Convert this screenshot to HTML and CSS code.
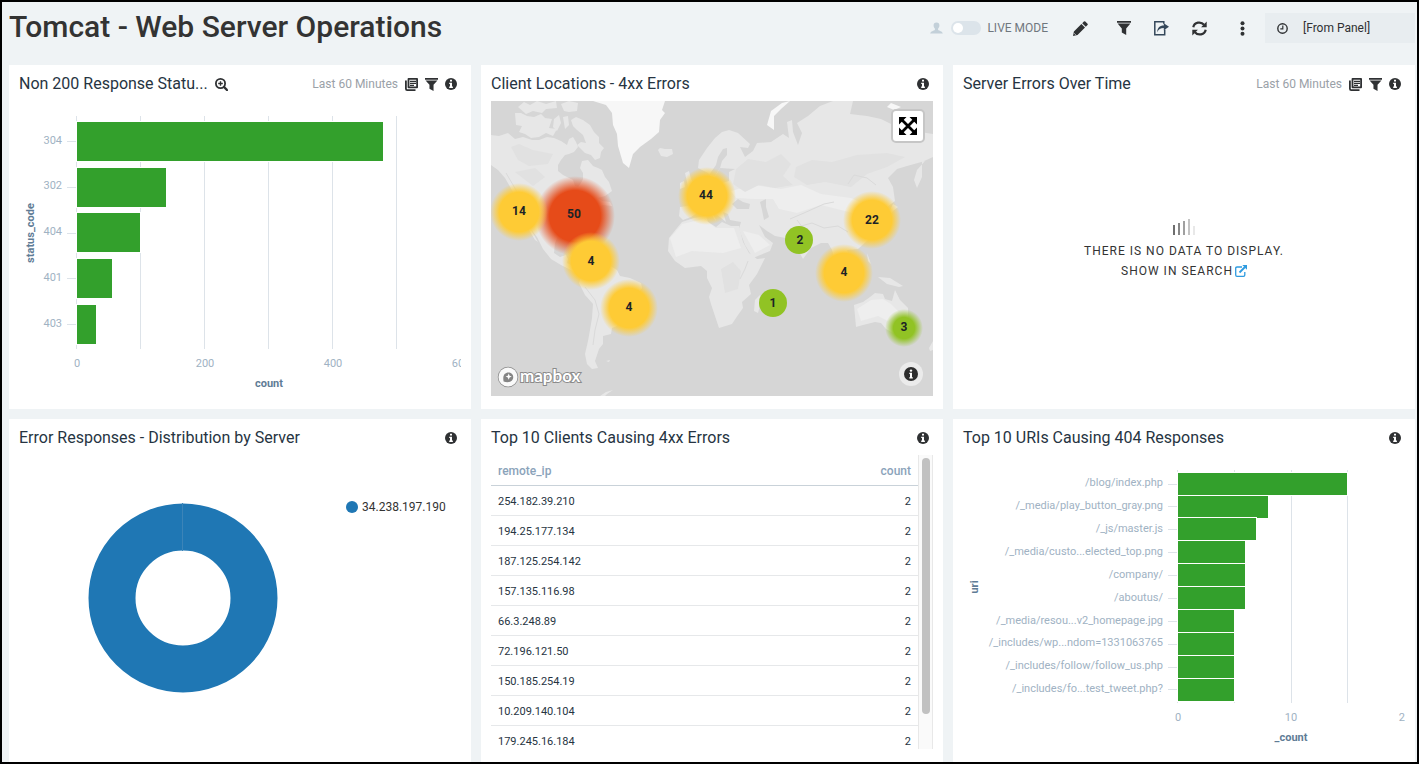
FILE: index.html
```html
<!DOCTYPE html>
<html lang="en">
<head>
<meta charset="utf-8">
<title>Tomcat - Web Server Operations</title>
<link rel="stylesheet" href="styles.css">
</head>
<body>
<svg class="defs" aria-hidden="true">
  <symbol id="i-info" viewBox="0 0 12 12"><circle cx="6" cy="6" r="6" fill="currentColor"/><path d="M5 1.800h2v1.800H5zM4.200 4.700H7v3.900h.9V10H4.200V8.600H5V6h-.8z" fill="#fff"/></symbol>
  <symbol id="i-filter" viewBox="0 0 14 14"><path d="M0 0h14v1.800H0zM.6 2.600h12.800L9.200 7.400V14L4.800 11.600V7.400z" fill="currentColor"/></symbol>
  <symbol id="i-copy" viewBox="0 0 13 13"><path d="M3.500.9h8.600v8.400H3.500z" fill="none" stroke="currentColor" stroke-width="1.800" stroke-linejoin="round"/><path d="M.9 2.600v8.200q0 1.300 1.300 1.300h8.300" fill="none" stroke="currentColor" stroke-width="1.800"/><path d="M5 3.300h6M5 5.300h6M5 7.300h4" stroke="currentColor" stroke-width="1.300"/></symbol>
  <symbol id="i-zoom" viewBox="0 0 13 13"><circle cx="5.500" cy="5.500" r="4.600" fill="none" stroke="currentColor" stroke-width="1.800"/><path d="M5.500 3.200v4.600M3.200 5.500h4.600" stroke="currentColor" stroke-width="1.400"/><path d="M9 9l3 3" stroke="currentColor" stroke-width="2.400" stroke-linecap="round"/></symbol>
</svg>
<div class="page">
  <header class="top">
    <h1>Tomcat - Web Server Operations</h1>
    <div class="tools">
      <label class="live">
        <svg class="person" viewBox="0 0 13 13"><path d="M6.500 0.500c2 0 3 1.300 2.900 3.100 0 1.300-.6 2.300-1.300 3v1.300c1 .8 4.200 1 4.700 3.600H.2c.5-2.600 3.700-2.800 4.700-3.600V6.600c-.7-.7-1.300-1.700-1.300-3C3.500 1.800 4.500.5 6.500.5z" fill="#c3d0d9"/></svg>
        <input type="checkbox" class="toggle">
        <span>LIVE MODE</span>
      </label>
      <div class="actions">
        <button type="button" aria-label="Edit"><svg width="15" height="15" viewBox="0 0 15 15"><path d="M0 15l.9-4.500L8.400 3l3.600 3.600-7.500 7.500zM9.200 2.200L10.900.5q.7-.6 1.400 0l2.200 2.200q.6.700 0 1.400l-1.700 1.700z" fill="#2f3133"/><path d="M1.200 12.300l1.500 1.500" stroke="#eff3f5" stroke-width=".8"/></svg></button>
        <div class="group">
          <button type="button" aria-label="Filter"><svg width="14" height="14"><use href="#i-filter"/></svg></button>
          <button type="button" aria-label="Share"><svg width="15" height="15" viewBox="0 0 15 15"><path d="M8.500.8H.8v12.900h9.900V8.500M.8.800h9v2" fill="none" stroke="#34475a" stroke-width="1.500"/><path d="M3.300 11.200C3.300 7 5.500 4.600 9.800 4.600V2.200L15 5.800 9.800 9.300V6.900C6.500 6.900 4.500 8 3.300 11.200z" fill="#34475a"/></svg></button>
          <button type="button" aria-label="Refresh"><svg width="15" height="15" viewBox="0 0 15 15"><path d="M1.300 6.200C2.200 1.200 9 0 12 3.800M13.700 8.800C12.800 13.800 6 15 3 11.200" fill="none" stroke="#2f3133" stroke-width="2.200"/><path d="M14.700.6v5.600H9.100zM.3 14.400V8.800h5.600z" fill="#2f3133"/></svg></button>
        </div>
        <button type="button" aria-label="More"><svg width="15" height="15" viewBox="0 0 15 15" fill="#2f3133"><circle cx="7.500" cy="2.200" r="2"/><circle cx="7.500" cy="7.500" r="2"/><circle cx="7.500" cy="12.800" r="2"/></svg></button>
      </div>
      <button type="button" class="range"><svg width="11" height="11" viewBox="0 0 11 11" fill="none" stroke="#2f3133"><circle cx="5.500" cy="5.500" r="4.700" stroke-width="1.400"/><path d="M5.800 2.500v3.400H3.300" stroke-width="1.200"/></svg><span>[From Panel]</span></button>
    </div>
  </header>

  <main class="grid">
    <section class="panel">
      <header class="head">
        <h2>Non 200 Response Statu...</h2>
        <svg class="mag" width="13" height="13"><use href="#i-zoom"/></svg>
        <div class="meta"><span>Last 60 Minutes</span><svg width="13" height="13"><use href="#i-copy"/></svg><svg width="13" height="13"><use href="#i-filter"/></svg><svg width="12" height="12"><use href="#i-info"/></svg></div>
      </header>
      <div class="body">
        <svg class="chart" viewBox="0 0 442 295" preserveAspectRatio="xMinYMin meet">
          <path class="gridline" d="M57.500 15v233M121.500 15v233M185.500 15v233M249.500 15v233M313.500 15v233M377.500 15v233M48 40.500h9M48 86.500h9M48 132.500h9M48 177.500h9M48 223.500h9"/>
          <g class="bars"><rect x="58" y="21" width="306" height="39"/><rect x="58" y="67" width="89" height="39"/><rect x="58" y="112" width="63" height="39"/><rect x="58" y="158" width="35" height="39"/><rect x="58" y="204" width="19" height="39"/></g>
          <g class="tick end"><text x="43" y="43">304</text><text x="43" y="88">302</text><text x="43" y="134">404</text><text x="43" y="180">401</text><text x="43" y="226">403</text></g>
          <g class="tick mid"><text x="58" y="266">0</text><text x="186" y="266">200</text><text x="314" y="266">400</text><text x="442" y="266">600</text></g>
          <text class="axis" x="250" y="286">count</text>
          <text class="axis" transform="translate(15 132) rotate(-90)">status_code</text>
        </svg>
      </div>
    </section>

    <section class="panel">
      <header class="head"><h2>Client Locations - 4xx Errors</h2><div class="meta"><svg width="12" height="12"><use href="#i-info"/></svg></div></header>
      <div class="body map">
        <svg class="world" viewBox="0 0 442 295" preserveAspectRatio="xMidYMid slice">
          <defs>
            <radialGradient id="gy"><stop offset="0" stop-color="#fecb35"/><stop offset=".68" stop-color="#fecb35"/><stop offset="1" stop-color="#fecb35" stop-opacity="0"/></radialGradient>
            <radialGradient id="gr"><stop offset="0" stop-color="#e64b19"/><stop offset=".64" stop-color="#e64b19"/><stop offset="1" stop-color="#e64b19" stop-opacity="0"/></radialGradient>
            <radialGradient id="gg"><stop offset="0" stop-color="#91c324"/><stop offset=".56" stop-color="#91c324"/><stop offset="1" stop-color="#91c324" stop-opacity="0"/></radialGradient>
          </defs>
          <rect width="442" height="295" fill="#d6d6d6"/>
          <g fill="#e7e7e7">
            <path d="M0 34L8 35 17 32 24 38 32 36 41 39 48 39 56 36 63 37 70 40 76 44 78 38 82 36 85 41 87 46 83 51 78 53 74 54 70 59 67 64 67 70 72 74 76 76 82 79 84 85 87 86 90 82 92 78 92 72 89 67 91 60 97 59 102 65 107 67 111 69 114 76 118 81 121 90 114 95 107 97 111 100 119 101 121 105 112 104 106 106 102 111 97 117 95 123 89 130 90 141 87 140 84 132 75 132 67 135 64 142 63 152 69 156 75 154 77 158 76 162 84 166 88 172 92 174 88 175 80 169 70 164 60 158 52 148 46 136 39 127 47 141 44 139 35 124 28 115 26 103 22 91 14 77 7 69 0 64z"/>
            <path d="M24 12L30 12 36 15 43 16 50 13 54 17 61 18 58 27 66 28 62 35 55 32 48 36 40 37 34 33 28 31 31 25 25 24z"/>
            <path d="M63 18L68 14 70 22 66 30 62 26zM72 16L77 15 78 24 74 28zM27 6L33 1 39 4 46 0 55 3 65 0 66 7 55 8 51 12 42 10 35 13zM70 3L78 0 87 2 86 10 78 11 73 10z"/>
            <path d="M80 19L85 16 92 19 99 24 103 31 108 36 108 42 113 47 110 51 109 57 104 59 100 54 94 52 90 48 86 44 90 41 95 42 92 34 86 29 82 25z"/>
            <path d="M167 49L169 47 174 48 181 48 182 53 176 56 170 55z"/>
            <path d="M92 161L99 157 110 158 121 166 126 169 129 175 139 177 150 182 151 187 145 195 143 203 139 209 134 216 127 219 126 225 121 227 120 233 112 235 112 243 108 248 106 254 104 260 107 267 101 268 96 263 94 253 97 240 99 229 101 217 102 203 94 194 88 182 90 175 93 168z"/>
            <path d="M109 295L115 291 122 289 116 293 114 295zM115 260L119 259 118 261zM438 247L442 240V249L439 250z"/>
            <path d="M191 121L203 117 215 115 217 121 225 126 231 121 240 125 248 125 252 141 258 152 266 158 274 157 266 173 258 184 260 193 251 201 252 207 247 214 241 223 228 227 225 218 220 203 218 196 221 187 216 177 216 170 210 165 194 167 184 160 177 150 178 137 186 127z"/>
            <path d="M264 199L269 194 270 201 267 212 263 210z"/>
            <path d="M207 67L208 59 216 47 224 37 231 31 238 29 247 32 259 43 257 47 249 46 254 56 262 50 266 42 280 41 292 33 298 37 296 21 301 19 302 31 307 44 311 32 306 22 317 15 329 5 342 0 362 0 359 13 376 15 390 18 404 25 417 29 442 33V56L431 61 431 76 426 87 423 79 426 69 434 60 416 65 406 68 397 77 402 86 404 100 396 106 388 112 385 125 378 138 367 148 356 149 360 161 353 169 350 163 347 155 350 172 355 181 349 177 344 160 341 149 337 142 330 142 320 147 312 158 305 145 300 138 284 135 276 130 268 124 274 136 282 142 279 150 262 157 254 144 248 128 250 121 239 119 237 113 232 111 235 121 229 116 221 110 225 120 217 109 209 110 200 116 192 119 188 115 189 106 203 104 198 96 208 91 216 87 220 80 224 84 238 80 238 71 244 68 229 67 222 79 217 72z"/>
            <path d="M194 72L198 70 200 78 205 86 198 89 196 81zM189 82L193 80 194 86 189 88z"/>
            <path d="M363 204L372 201 379 196 384 192 392 193 394 198 401 200 404 189 409 199 417 207 417 217 412 227 402 232 395 228 390 222 384 221 372 224 365 226z"/>
            <path d="M387 176L399 177 412 185 408 186 396 183zM335 171L342 177 350 189 345 186zM357 174L366 169 367 178 362 184 357 181zM376 152L380 163 377 160zM402 103L407 106 402 110 397 117 393 117 399 109z"/>
          </g>
          <g fill="#f7f7f7"><path d="M102 0H174L171 9 174 12 169 19 168 31 160 38 149 46 142 53 138 67 132 62 127 45 126 33 122 24 121 12 115 4z"/><path d="M276 24L280 10 291 2 299 0 290 8 283 15 283 29z"/><path d="M396 6L400 2 410 6 403 9z"/></g>
          <g fill="#eeeeee"><path d="M179 137L191 123 213 118 225 127 243 127 250 147 232 152 201 150 185 156z"/><path d="M366 208L380 199 392 198 400 203 408 211 397 220 387 215 370 220z"/><path d="M252 130L268 134 279 144 264 152z"/><path d="M240 90L262 84 290 88 310 84 330 93 360 97 378 105 362 112 330 104 306 112 288 108 282 98 264 98 245 97z"/></g>
          <g fill="#e1e1e1"><path d="M245 68L257 58 275 61 290 53 300 63 292 75 302 84 284 87 268 84 254 91 242 83z"/><path d="M305 66L321 59 341 61 366 54 396 52 414 56 396 66 376 73 360 86 334 81 316 84 303 76z"/><path d="M20 46L28 43 42 49 62 53 57 63 38 65 27 59zM24 71L44 67 54 76 42 85z"/><path d="M230 168L242 161 250 170 247 188 234 192z"/></g>
          <g fill="none" stroke="#dadada" stroke-width="1"><path d="M94 186L104 199 108 213 104 229 102 244M299 118L313 112 333 103 343 101M303 127L321 122 333 127 347 125 357 131M318 138L312 127 306 119M15 72L25 89 32 109 40 125M249 178L254 168 257 160M357 83L363 74 376 77 385 84"/></g>
          <g fill="#d6d6d6"><path d="M232 48L236 47 236 54 231 60 229 67 224 75 218 74 225 64 227 56z"/><path d="M241 103L247 98 252 101 259 103 258 108 246 108z"/><path d="M269 101L275 98 275 106 278 116 273 119 271 109z"/></g>
          <g>
            <circle cx="84" cy="115" r="40" fill="url(#gr)"/>
            <g fill="url(#gy)"><circle cx="28" cy="111" r="29"/><circle cx="216" cy="95" r="29"/><circle cx="381" cy="119" r="29"/><circle cx="100" cy="160" r="29"/><circle cx="138" cy="207" r="29"/><circle cx="353" cy="172" r="29"/></g>
            <circle cx="308" cy="139" r="14" fill="#91c324"/><circle cx="282" cy="202" r="14" fill="#91c324"/><circle cx="413" cy="227" r="19" fill="url(#gg)"/>
          </g>
          <g class="pin"><text x="28" y="114">14</text><text x="83" y="117">50</text><text x="215" y="98">44</text><text x="381" y="123">22</text><text x="100" y="164">4</text><text x="138" y="210">4</text><text x="353" y="175">4</text><text x="309" y="143">2</text><text x="282" y="206">1</text><text x="413" y="230">3</text></g>
        </svg>
        <button type="button" class="expand" aria-label="Full screen"><svg width="18" height="18" viewBox="0 0 18 18"><path d="M3 3l12 12M15 3L3 15" stroke="#000" stroke-width="2.800"/><path d="M0 0h7.500L0 7.500zM18 0v7.500L10.500 0zM0 18v-7.500L7.500 18zM18 18h-7.500l7.500-7.500z"/></svg></button>
        <a href="#" class="brand"><svg width="22" height="22" viewBox="0 0 22 22"><circle cx="11" cy="11" r="9.500" fill="#fafafa" stroke="#8b8b8b" stroke-width="1.500"/><path d="M6.600 15.500c-.6-3-.4-5.800 1-7.400 2-2.200 5.300-2.200 7.200-.3s2 5-.1 7c-1.800 1.600-5 1.700-8.100.7z" fill="#858585"/><path d="M11.700 7.500l.9 2.200 2.200.9-2.200.9-.9 2.200-.9-2.200-2.200-.9 2.200-.9z" fill="#fff"/></svg><span>mapbox</span></a>
        <button type="button" class="credit" aria-label="Attribution"><svg width="14" height="14" viewBox="0 0 14 14"><circle cx="7" cy="7" r="7" fill="#2d2d2d"/><circle cx="7" cy="3.600" r="1.200" fill="#fff"/><path d="M5.300 5.700H8v4.500h.8v1.200H5.300v-1.200H6V6.900h-.7z" fill="#fff"/></svg></button>
      </div>
    </section>

    <section class="panel">
      <header class="head"><h2>Server Errors Over Time</h2><div class="meta"><span>Last 60 Minutes</span><svg width="13" height="13"><use href="#i-copy"/></svg><svg width="13" height="13"><use href="#i-filter"/></svg><svg width="12" height="12"><use href="#i-info"/></svg></div></header>
      <div class="body empty">
        <svg width="22" height="16" viewBox="0 0 22 16"><path d="M0 6h2v10H0z" fill="#6e6e6e"/><path d="M5 4h2v12H5z" fill="#868686"/><path d="M10 2h2v14h-2z" fill="#a0a0a0"/><path d="M15 0h2v16h-2z" fill="#c4c4c4"/><path d="M20 7h2v9h-2z" fill="#e8e8e8"/></svg>
        <p>THERE IS NO DATA TO DISPLAY.</p>
        <a href="#">SHOW IN SEARCH<svg width="12" height="12" viewBox="0 0 12 12"><path d="M7 2H2Q.7 2 .7 3.300V10q0 1.300 1.300 1.300h6.500q1.300 0 1.300-1.300V7" fill="none" stroke="#2e9be0" stroke-width="1.300"/><path d="M4.500 7.500L10 2" stroke="#2e9be0" stroke-width="1.800"/><path d="M7.300 0H12v4.700z" fill="#2e9be0"/></svg></a>
      </div>
    </section>

    <section class="panel">
      <header class="head"><h2>Error Responses - Distribution by Server</h2><div class="meta"><svg width="12" height="12"><use href="#i-info"/></svg></div></header>
      <div class="body pie">
        <svg class="donut" width="190" height="190" viewBox="0 0 190 190"><circle cx="95" cy="95" r="71" fill="none" stroke="#1f77b4" stroke-width="47"/><path d="M94.500 0v48" stroke="#3b84b8"/></svg>
        <div class="legend"><i></i><span>34.238.197.190</span></div>
      </div>
    </section>

    <section class="panel">
      <header class="head"><h2>Top 10 Clients Causing 4xx Errors</h2><div class="meta"><svg width="12" height="12"><use href="#i-info"/></svg></div></header>
      <div class="body list">
        <div class="rows">
          <table>
            <thead><tr><th scope="col">remote_ip</th><th scope="col">count</th></tr></thead>
            <tbody>
              <tr><td>254.182.39.210</td><td>2</td></tr>
              <tr><td>194.25.177.134</td><td>2</td></tr>
              <tr><td>187.125.254.142</td><td>2</td></tr>
              <tr><td>157.135.116.98</td><td>2</td></tr>
              <tr><td>66.3.248.89</td><td>2</td></tr>
              <tr><td>72.196.121.50</td><td>2</td></tr>
              <tr><td>150.185.254.19</td><td>2</td></tr>
              <tr><td>10.209.140.104</td><td>2</td></tr>
              <tr><td>179.245.16.184</td><td>2</td></tr>
            </tbody>
          </table>
        </div>
        <div class="track"><div class="thumb"></div></div>
      </div>
    </section>

    <section class="panel">
      <header class="head"><h2>Top 10 URIs Causing 404 Responses</h2><div class="meta"><svg width="12" height="12"><use href="#i-info"/></svg></div></header>
      <div class="body">
        <svg class="chart" viewBox="0 0 442 295" preserveAspectRatio="xMinYMin meet">
          <path class="gridline" d="M214.500 15v233M271.500 15v233M328.500 15v233M384.500 15v233M205 29.500h9M205 51.500h9M205 74.500h9M205 97.500h9M205 120.500h9M205 143.500h9M205 166.500h9M205 189.500h9M205 212.500h9M205 234.500h9"/>
          <g class="bars"><rect x="215" y="18" width="169" height="22"/><rect x="215" y="41" width="90" height="22"/><rect x="215" y="63" width="78" height="22"/><rect x="215" y="86" width="67" height="22"/><rect x="215" y="109" width="67" height="22"/><rect x="215" y="132" width="67" height="22"/><rect x="215" y="155" width="56" height="22"/><rect x="215" y="178" width="56" height="22"/><rect x="215" y="201" width="56" height="22"/><rect x="215" y="224" width="56" height="22"/></g>
          <g class="tick end"><text x="200" y="31">/blog/index.php</text><text x="200" y="54">/_media/play_button_gray.png</text><text x="200" y="77">/_js/master.js</text><text x="200" y="100">/_media/custo...elected_top.png</text><text x="200" y="123">/company/</text><text x="200" y="146">/aboutus/</text><text x="200" y="169">/_media/resou...v2_homepage.jpg</text><text x="200" y="191">/_includes/wp...ndom=1331063765</text><text x="200" y="214">/_includes/follow/follow_us.php</text><text x="200" y="237">/_includes/fo...test_tweet.php?</text></g>
          <g class="tick mid"><text x="215" y="266">0</text><text x="328" y="266">10</text><text x="442" y="266">20</text></g>
          <text class="axis" x="328" y="286">_count</text>
          <text class="axis" transform="translate(15 132) rotate(-90)">uri</text>
        </svg>
      </div>
    </section>
  </main>
</div>
</body>
</html>
```
FILE: styles.css
```css
* { box-sizing: border-box; }
body { margin: 0; font-family: Roboto, "Liberation Sans", sans-serif; color: #2f3133; }
h1, h2, p { margin: 0; }
svg { display: block; flex: none; }
button { padding: 0; border: 0; background: none; font: inherit; color: inherit; cursor: pointer; }
a { color: inherit; text-decoration: none; }
.defs { position: absolute; width: 0; height: 0; }

.page { display: flex; flex-direction: column; height: 100vh; min-height: 600px; overflow: hidden; border: 2px solid #000; background: #eff3f5; }
.top { display: flex; align-items: flex-start; justify-content: space-between; flex: none; height: 63px; padding: 6px 2px 0 7px; }
h1 { font-size: 30px; line-height: 38px; font-weight: 500; color: #333; }
.tools { display: flex; align-items: center; height: 30px; margin-top: 5px; font-size: 12px; }
.live { display: flex; align-items: center; color: #6f777e; }
.person { width: 13px; height: 13px; }
.toggle { appearance: none; width: 30px; height: 14px; margin: 0 6px 0 8px; padding: 2px; border-radius: 7px; background: #dce4ea; }
.toggle::before { content: ""; display: block; width: 10px; height: 10px; border-radius: 50%; background: #fff; }
.toggle:checked::before { margin-left: auto; }
.actions { display: flex; gap: 28px; padding: 0 15px 0 25px; }
.group { display: flex; gap: 23px; }
.actions button { display: flex; align-items: center; justify-content: center; width: 15px; height: 30px; }
.range { display: flex; align-items: center; gap: 15px; width: 150px; height: 30px; padding: 0 12px; background: #e8edf0; }

.grid { flex: 1; min-height: 0; display: grid; grid-template-columns: repeat(3, minmax(0, 1fr)); grid-template-rows: minmax(0, 344fr) minmax(0, 343fr); gap: 10px; padding: 0 2px 0 7px; }
.panel { display: flex; flex-direction: column; min-height: 0; padding: 0 10px 13px; background: #fff; }
.head { display: flex; align-items: center; flex: none; height: 36px; padding-top: 2px; }
h2 { font-size: 16px; line-height: 20px; font-weight: 400; color: #263442; white-space: nowrap; }
.mag { margin-left: 7px; }
.meta { display: flex; align-items: center; gap: 7px; margin-left: auto; padding-right: 4px; font-size: 12px; color: #2f3133; }
.meta span { color: #9aa1a8; }
.body { flex: 1; min-height: 0; overflow: hidden; }

.chart { width: 100%; height: auto; }
.gridline { fill: none; stroke: #dde3e9; stroke-width: 1; }
.bars rect { fill: #33a02c; outline: 1px solid #fff; }
.tick { font-size: 11px; fill: #a0b2c3; }
.end { text-anchor: end; }
.mid { text-anchor: middle; }
.axis { font-size: 11px; font-weight: 700; text-anchor: middle; fill: #5f7c96; }

.map { position: relative; }
.world { width: 100%; height: 100%; }
.pin { font-size: 12px; font-weight: 700; text-anchor: middle; fill: #1c2326; }
.expand { position: absolute; top: 8px; right: 8px; display: flex; align-items: center; justify-content: center; width: 34px; height: 34px; border: 2px solid #c6c6c6; border-radius: 5px; background: #fff; }
.brand { position: absolute; left: 6px; bottom: 7px; display: flex; align-items: center; gap: 1px; font: 700 17px/22px Lato, sans-serif; color: #fff; -webkit-text-stroke: 2px #8b8b8b; paint-order: stroke fill; }
.brand span { padding-bottom: 2px; }
.credit { position: absolute; right: 10px; bottom: 10px; display: flex; align-items: center; justify-content: center; width: 24px; height: 24px; border-radius: 50%; background: #ebebeb; }

.empty { display: flex; flex-direction: column; align-items: center; justify-content: center; padding-top: 3px; font-size: 12px; line-height: 20px; letter-spacing: 1px; color: #333; }
.empty p { margin-top: 6px; }
.empty a { display: flex; align-items: center; gap: 2px; }

.pie { display: grid; grid-template-columns: 327fr 115fr; justify-items: center; align-items: start; padding-top: 46px; }
.donut { margin-top: 2px; }
.legend { display: flex; align-items: center; gap: 4px; justify-self: start; font-size: 12px; line-height: 12px; color: #333; }
.legend i { width: 12px; height: 12px; border-radius: 50%; background: #1f77b4; }

.list { display: flex; }
.rows { flex: 1; overflow: hidden; }
table { width: 100%; border-collapse: separate; border-spacing: 0; font-size: 11px; color: #263442; }
th, td { height: 30px; padding: 2px 7px 0; border-bottom: 1px solid #e6e8ea; text-align: left; }
th { height: 31px; border-color: #c9d2d9; font-size: 12px; font-weight: 500; color: #8ba3ba; }
th:last-child, td:last-child { text-align: right; }
.track { width: 15px; padding: 3px; border: solid #e8e8e8; border-width: 0 1px; background: #fafafa; }
.thumb { width: 8px; height: 89%; border-radius: 4px; background: #c1c1c1; }
```
